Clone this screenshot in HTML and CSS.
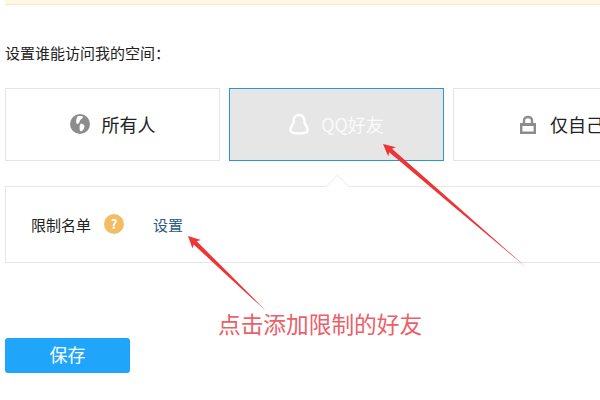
FILE: index.html
```html
<!DOCTYPE html>
<html lang="en">
<head>
    <meta charset="UTF-8">
    <title>设置谁能访问我的空间</title>
    <link rel="stylesheet" href="styles.css">
</head>
<body>
    <div class="notice"></div>
    <p class="title">设置谁能访问我的空间：</p>
    <div class="options">
        <div class="option">
            <svg class="icon" width="20" height="20" viewBox="0 0 20 20">
                <circle cx="10" cy="10" r="10" fill="#8c8c8c"/>
                <path d="M7.5 2.4C9.5 1.6 12 1.8 13.2 2.8 12.6 4.4 11.2 5 10.4 6 9.6 7.2 9.2 9.2 7.8 10 6.6 10.2 6 8.8 6.2 7 6.3 5.2 6.8 3.6 7.5 2.4Z" fill="#fff"/>
                <path d="M11.2 9.6C12.4 9.8 13.2 11 14.4 11.2 14.8 12.8 14 14.6 13 16 12.2 17.2 11 17.6 10.2 17 9.4 15.8 9.8 14.4 9.6 13 9.6 11.4 10.2 10 11.2 9.6Z" fill="#fff"/>
            </svg>
            <span>所有人</span>
        </div>
        <div class="option option-active">
            <svg class="icon" width="20" height="22" viewBox="0 0 20 22">
                <path d="M10 2C6.4 2 4.6 4.8 4.6 7.8V9.6L2.4 13.6C1.2 15.8 1.2 18 2.4 19 3.8 20 6.5 20.4 10 20.4S16.2 20 17.6 19C18.8 18 18.8 15.8 17.6 13.6L15.4 9.6V7.8C15.4 4.8 13.6 2 10 2Z" fill="none" stroke="#fff" stroke-width="2.4" stroke-linejoin="round"/>
            </svg>
            <span>QQ好友</span>
        </div>
        <div class="option option-right">
            <svg class="icon" width="16" height="19" viewBox="0 0 16 19">
                <path d="M4 8V5.5C4 3.2 5.6 2 8 2S12 3.2 12 5.5V8" fill="none" stroke="#8c8c8c" stroke-width="2.4"/>
                <path d="M0 8H16V19H0ZM2.4 11V16.6H13.6V11Z" fill="#8c8c8c" fill-rule="evenodd"/>
            </svg>
            <span>仅自己</span>
        </div>
    </div>
    <div class="panel">
        <span class="notch"></span>
        <span>限制名单</span>
        <span class="help">?</span>
        <a class="link">设置</a>
    </div>
    <button class="save">保存</button>

    <!-- annotation drawn over the screenshot -->
    <svg class="arrows" width="600" height="400" viewBox="0 0 600 400">
        <path d="M383 144 396 147.3 392 148.8 455.9 204.9 527 268 454.1 207.1 389.2 152.2 388.2 156.3Z" fill="#ee3434"/>
        <path d="M188 236 200.8 240 196.7 241.3 228 272.5 266 311 226 274.5 193.7 244.5 192.5 248.6Z" fill="#ee3434"/>
    </svg>
    <div class="note">点击添加限制的好友</div>
</body>
</html>
```

FILE: styles.css
```css
body {
    font-family: "Noto Sans CJK SC", "Liberation Sans", sans-serif;
    background-color: #ffffff;
    margin: 0;
    padding-left: 5px;
    width: 595px;
    height: 400px;
    overflow: hidden;
    color: #222222;
}
.notice {
    height: 4px;
    background-color: #fef8e2;
    border-bottom: 1px solid #f6ebc6;
}
.title {
    margin: 38px 0 0;
    font-size: 15px;
    line-height: 20px;
}
.options {
    display: flex;
    gap: 9px;
    margin-top: 25px;
}
.option {
    flex: none;
    width: 215px;
    height: 73px;
    box-sizing: border-box;
    border: 1px solid #e4e4e4;
    padding-bottom: 1px;
    display: flex;
    align-items: center;
    justify-content: center;
    gap: 12px;
    font-size: 18px;
}
.option-active {
    background-color: #e6e6e6;
    border-color: #2996d8;
    color: #fafafa;
}
.option-right {
    justify-content: flex-start;
    padding-left: 66px;
    gap: 14px;
}
.icon {
    flex: none;
}
.panel {
    position: relative;
    margin-top: 25px;
    width: 640px;
    height: 77px;
    box-sizing: border-box;
    border: 1px solid #e6e6e6;
    padding: 0 0 1px 25px;
    display: flex;
    align-items: center;
    font-size: 15px;
}
.notch {
    position: absolute;
    left: 323px;
    top: -9px;
    width: 16px;
    height: 16px;
    background-color: #ffffff;
    border-top: 1px solid #eeeeee;
    border-left: 1px solid #eeeeee;
    transform: rotate(45deg);
}
.help {
    width: 20px;
    height: 20px;
    margin-left: 13px;
    border-radius: 50%;
    background-color: #f2bd63;
    color: #ffffff;
    font-size: 13px;
    font-weight: bold;
    line-height: 20px;
    text-align: center;
}
.link {
    margin-left: 29px;
    color: #2c5a85;
}
.save {
    display: block;
    width: 125px;
    height: 35px;
    margin-top: 75px;
    padding: 0 0 3px;
    border: none;
    border-radius: 3px;
    background-color: #1fa6fb;
    color: #ffffff;
    font-family: inherit;
    font-size: 18px;
}
.arrows {
    position: absolute;
    left: 0;
    top: 0;
}
.note {
    position: absolute;
    left: 218px;
    top: 308px;
    font-family: "Noto Sans CJK SC", serif;
    font-size: 22.7px;
    line-height: 32px;
    color: #ec6068;
}
```
